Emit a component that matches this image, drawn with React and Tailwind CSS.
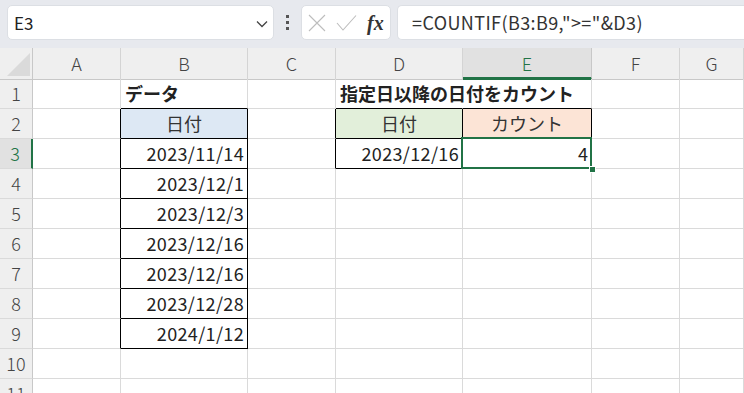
import React from 'react';

const cols = ['A', 'B', 'C', 'D', 'E', 'F', 'G'];
const grid = 'grid grid-cols-[33px_88px_127px_88px_127px_129px_88px_1fr]';
const font = { fontFamily: '"Noto Sans CJK JP", "Noto Sans", sans-serif' };

const dates = ['2023/11/14', '2023/12/1', '2023/12/3', '2023/12/16', '2023/12/16', '2023/12/28', '2024/1/12'];

const Toolbar = () => (
  <div className="flex h-[48px] items-start gap-0 bg-[#e7e9ee] pt-[5px]">
    <div className="ml-[7px] flex h-[35px] w-[267px] items-center justify-between rounded-[5px] border border-[#dcdfe4] bg-white pl-[6px] pr-[5px]">
      <span className="text-[17px] text-[#222]">E3</span>
      <svg width="12" height="8" viewBox="0 0 12 8" className="mt-[2px]">
        <path d="M1 1.5 L6 6.5 L11 1.5" fill="none" stroke="#444" strokeWidth="1.3" />
      </svg>
    </div>
    <div className="flex h-[35px] w-[27px] flex-col items-center justify-center gap-[3px]">
      <span className="h-[3px] w-[3px] bg-[#555]" />
      <span className="h-[3px] w-[3px] bg-[#555]" />
      <span className="h-[3px] w-[3px] bg-[#555]" />
    </div>
    <div className="flex h-[35px] w-[90px] items-center rounded-[5px] border border-[#dcdfe4] bg-white pl-[6px]">
      <svg width="18" height="18" viewBox="0 0 18 18">
        <path d="M1 1 L17 17 M17 1 L1 17" stroke="#bdbdbd" strokeWidth="1.1" />
      </svg>
      <svg width="21" height="18" viewBox="0 0 21 18" className="ml-[10px]">
        <path d="M1 9 L7 16 L20 1.5" fill="none" stroke="#bdbdbd" strokeWidth="1.1" />
      </svg>
      <span
        className="ml-[10px] text-[20px] font-bold italic text-[#333]"
        style={{ fontFamily: '"Liberation Serif", serif' }}
      >
        fx
      </span>
    </div>
    <div className="ml-[6px] flex h-[35px] flex-1 items-center rounded-l-[5px] border border-r-0 border-[#dcdfe4] bg-white pl-[14px]">
      <span className="text-[18px] tracking-[0.4px] text-[#333]">=COUNTIF(B3:B9,"&gt;="&amp;D3)</span>
    </div>
  </div>
);

const HeaderRow = () => (
  <div className={`${grid} h-[31px]`}>
    <div className="relative border-r border-b border-[#c8c8c8] bg-[#efefef]">
      <svg width="23" height="23" viewBox="0 0 23 23" className="absolute left-[7px] top-[5px]">
        <path d="M23 0 L23 23 L0 23 Z" fill="#dadada" />
      </svg>
    </div>
    {cols.map((c) => (
      <div
        key={c}
        className={
          c === 'E'
            ? 'flex items-center justify-center border-r border-b-[3px] border-r-[#c8c8c8] border-b-[#217346] bg-[#e1e1e1] pt-[2px] text-[18px] font-light text-[#217346]'
            : 'flex items-center justify-center border-r border-b border-[#d4d4d4] border-b-[#c8c8c8] bg-[#efefef] text-[18px] font-light text-[#444]'
        }
      >
        {c}
      </div>
    ))}
  </div>
);

const Cell = ({ children, className = '' }) => (
  <div className={`relative flex h-[30px] items-center border-r border-b border-[#dadada] px-[4px] text-[18px] text-[#222] ${className}`}>
    {children}
  </div>
);

const Row = ({ n, children }) => (
  <div className={grid}>
    <div
      className={
        n === 3
          ? 'flex h-[30px] items-center justify-center border-r-2 border-b border-r-[#217346] border-b-[#dadada] bg-[#e1e1e1] pr-[1px] text-[18px] font-light text-[#217346]'
          : 'flex h-[30px] items-center justify-center border-r border-b border-r-[#c8c8c8] border-b-[#dadada] bg-[#efefef] text-[18px] font-light text-[#444]'
      }
    >
      {n}
    </div>
    {children}
  </div>
);

const EmptyRow = ({ n }) => (
  <Row n={n}>
    <Cell />
    <Cell />
    <Cell />
    <Cell />
    <Cell />
    <Cell />
    <Cell />
  </Row>
);

export default function App() {
  return (
    <div className="h-[393px] w-[744px] overflow-hidden bg-white" style={font}>
      <Toolbar />
      <HeaderRow />
      <Row n={1}>
        <Cell />
        <Cell className="border-b-black font-bold">データ</Cell>
        <Cell />
        <Cell className="z-10 overflow-visible whitespace-nowrap border-r-transparent border-b-black font-bold">
          指定日以降の日付をカウント
        </Cell>
        <Cell className="border-b-black" />
        <Cell />
        <Cell />
      </Row>
      <Row n={2}>
        <Cell className="border-r-black" />
        <Cell className="justify-center border-r-black border-b-black bg-[#dde8f4] text-[#333]">日付</Cell>
        <Cell className="border-r-black" />
        <Cell className="justify-center border-r-black border-b-black bg-[#e2efda] text-[#333]">日付</Cell>
        <Cell className="justify-center border-r-black border-b-black bg-[#fce4d6] text-[#333]">カウント</Cell>
        <Cell />
        <Cell />
      </Row>
      {dates.map((d, i) => {
        const n = i + 3;
        return (
          <Row key={n} n={n}>
            <Cell className="border-r-black" />
            <Cell className="justify-end border-r-black border-b-black pr-[3px] tracking-[0.35px]">{d}</Cell>
            {n === 3 ? (
              <>
                <Cell className="border-r-black" />
                <Cell className="justify-end border-r-black border-b-black pr-[3px] tracking-[0.35px]">2023/12/16</Cell>
                <Cell className="justify-end border-r-black border-b-black pr-[3px]">
                  4
                  <span className="absolute -left-[2px] -top-[2px] h-[32px] w-[131px] border-2 border-[#217346]" />
                  <span className="absolute -right-[5px] -bottom-[5px] z-10 h-[7px] w-[7px] border border-white bg-[#217346]" />
                </Cell>
              </>
            ) : (
              <>
                <Cell />
                <Cell />
                <Cell />
              </>
            )}
            <Cell />
            <Cell />
          </Row>
        );
      })}
      <EmptyRow n={10} />
      <EmptyRow n={11} />
    </div>
  );
}
